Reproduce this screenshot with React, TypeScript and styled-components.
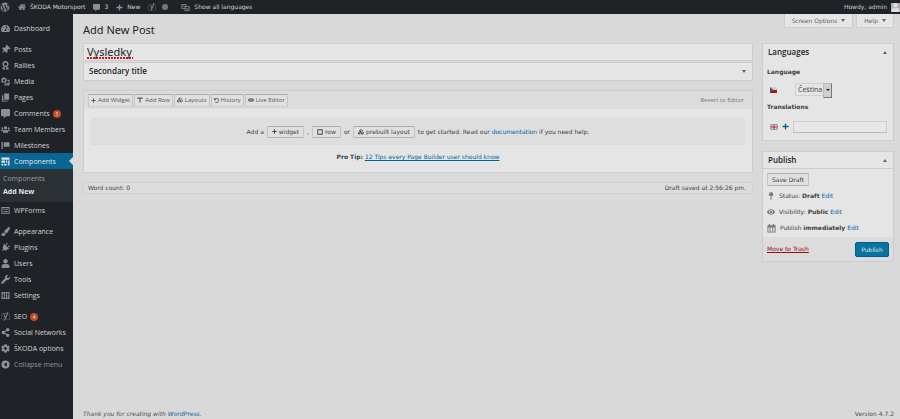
import React from "react";
import styled, { createGlobalStyle, css } from "styled-components";
import {
  FaWordpress, FaHome, FaCommentAlt, FaPlus, FaThumbtack, FaTachometerAlt, FaAward,
  FaPaintBrush, FaPlug, FaUser, FaWrench, FaYoast, FaShareAlt, FaCog, FaEye, FaUsers,
  FaUndo, FaMapPin, FaCubes,
} from "react-icons/fa";

const c = {
  dark: "#1f2328",
  sub: "#2b3035",
  blue: "#076694",
  link: "#00629a",
  page: "#d9d9d9",
  panel: "#e5e5e5",
  bar: "#dcdcdc",
  line: "#cdcdcd",
  text: "#3c3f43",
  strong: "#202428",
  icon: "#8b9095",
  menu: "#d2d2d2",
};

const menuFont = '"Open Sans", "Noto Sans", sans-serif';
const headFont = '"Noto Sans", "Open Sans", sans-serif';

const Global = createGlobalStyle`
  * { box-sizing: border-box; }
  html, body { margin: 0; background: ${c.page}; }
  body, button, input, select { font-family: "DejaVu Sans", "Noto Sans", sans-serif; font-size: 6px; }
  body { line-height: 10px; color: ${c.text}; }
  a { color: ${c.link}; text-decoration: none; }
  svg { flex: none; display: block; }
`;

const Page = styled.div`
  min-height: 100vh;
  display: flex;
  flex-direction: column;
`;

const AdminBar = styled.header`
  height: 14px;
  display: flex;
  align-items: center;
  gap: 8px;
  background: ${c.dark};
`;

const BarLink = styled.a<{ $end?: boolean; $wide?: boolean }>`
  display: flex;
  align-items: center;
  gap: ${(p) => (p.$wide ? 6 : 4)}px;
  color: ${c.menu};
  white-space: nowrap;
  margin-left: ${(p) => (p.$end ? "auto" : "0")};
  svg { color: ${c.icon}; }
`;

const Dot = styled.span`
  width: 6px;
  height: 6px;
  margin-right: 5px;
  border-radius: 50%;
  background: #74787c;
`;

const Avatar = styled.span`
  width: 9px;
  height: 9px;
  overflow: hidden;
  background: #b0b0b0;
  svg { color: #dedede; }
`;

const Body = styled.div`
  flex: 1;
  display: flex;
`;

const Sidebar = styled.nav`
  flex: none;
  width: 73px;
  padding-top: 6px;
  background: ${c.dark};
  font-family: ${menuFont};
  font-size: 7px;
`;

const MenuList = styled.ul`
  list-style: none;
  margin: 0 0 5px;
  padding: 0;
`;

const MenuLink = styled.a<{ $current?: boolean }>`
  position: relative;
  display: flex;
  align-items: center;
  gap: 4px;
  height: 16px;
  padding: 1px 0 0 1px;
  color: ${c.menu};
  white-space: nowrap;
  svg { color: ${c.icon}; }
  ${(p) =>
    p.$current &&
    css`
      background: ${c.blue};
      color: #e5e5e5;
      svg { color: #e5e5e5; }
      &::after {
        content: "";
        position: absolute;
        right: 0;
        top: 4px;
        border: 4px solid transparent;
        border-left-width: 0;
        border-right-color: ${c.page};
      }
    `}
`;

const CollapseButton = styled.button`
  display: flex;
  align-items: center;
  gap: 4px;
  height: 16px;
  padding: 1px 0 0 1px;
  border: 0;
  background: none;
  color: #8f9397;
  font-family: ${menuFont};
  font-size: 7px;
  line-height: 10px;
  white-space: nowrap;
`;

const SubMenu = styled.div`
  display: flex;
  flex-direction: column;
  gap: 3px;
  height: 33px;
  padding: 5px 3px;
  background: ${c.sub};
`;

const SubLink = styled.a<{ $current?: boolean }>`
  color: ${(p) => (p.$current ? "#e5e5e5" : "#9a9da1")};
  font-weight: ${(p) => (p.$current ? 700 : 400)};
`;

const Badge = styled.span`
  width: 8px;
  height: 8px;
  margin-left: -1px;
  border-radius: 50%;
  background: #bf4a22;
  color: #e5e5e5;
  font-size: 5px;
  line-height: 8px;
  text-align: center;
`;

const Content = styled.div`
  flex: 1;
  min-width: 0;
  display: flex;
  flex-direction: column;
  padding: 0 6px 0 10px;
`;

const HeadRow = styled.div`
  display: flex;
  justify-content: space-between;
  align-items: flex-start;
  height: 29px;
`;

const Heading = styled.h1`
  margin: 8px 0 0;
  font-family: ${headFont};
  font-size: 11px;
  line-height: 16px;
  font-weight: 400;
  color: ${c.strong};
`;

const ScreenTabs = styled.div`
  display: flex;
  gap: 3px;
`;

const ScreenTab = styled.button`
  display: flex;
  align-items: center;
  gap: 4px;
  height: 14px;
  padding: 0 7px;
  border: 1px solid ${c.line};
  border-top: 0;
  background: ${c.panel};
  color: #5e6368;
`;

const Triangle = styled.span<{ $up?: boolean }>`
  border: 2px solid transparent;
  ${(p) =>
    p.$up
      ? "border-top-width: 0; border-bottom: 3px solid #5e6368;"
      : "border-bottom-width: 0; border-top: 3px solid #5e6368;"}
`;

const Columns = styled.div`
  display: flex;
  gap: 9px;
  align-items: flex-start;
`;

const Editor = styled.main`
  flex: 1;
  min-width: 0;
`;

const Aside = styled.aside`
  width: 132px;
  display: flex;
  flex-direction: column;
  gap: 10px;
`;

const TitleInput = styled.input`
  display: block;
  width: 100%;
  height: 18px;
  padding: 0 3px 1px;
  border: 1px solid ${c.line};
  background: repeating-linear-gradient(90deg, #d01822 0 2px, transparent 2px 3px) 3px 13px / 46px 2px
    no-repeat ${c.panel};
  color: ${c.strong};
  font-family: ${headFont};
  font-size: 11px;
  line-height: 14px;
`;

const Box = styled.section`
  border: 1px solid ${c.line};
  background: ${c.panel};
`;

const SecondaryBox = styled(Box)`
  margin: 1px 0 9px;
`;

const BoxHead = styled.header<{ $divided?: boolean }>`
  display: flex;
  align-items: center;
  justify-content: space-between;
  height: 17px;
  padding: 0 6px 0 5px;
  border-bottom: 1px solid ${(p) => (p.$divided ? c.line : "transparent")};
`;

const BoxTitle = styled.h2`
  margin: 0;
  font-family: ${menuFont};
  font-size: 8px;
  line-height: 10px;
  font-weight: 600;
  color: ${c.strong};
`;

const ToggleButton = styled.button`
  display: flex;
  padding: 2px 0;
  border: 0;
  background: none;
`;

const Toolbar = styled.div`
  display: flex;
  align-items: center;
  gap: 1px;
  height: 18px;
  padding: 0 8px 0 4px;
  background: ${c.bar};
  font-family: ${menuFont};
`;

const SmallButton = styled.button`
  display: flex;
  align-items: center;
  gap: 2px;
  border: 1px solid #c4c4c4;
  border-top-color: #adadad;
  border-bottom-color: #b4b4b4;
  border-radius: 1px;
  background: #e0e0e0;
  color: ${c.text};
  white-space: nowrap;
`;

const ToolButton = styled(SmallButton)`
  height: 13px;
  padding: 0 2px;
  border-bottom-color: #cccccc;
  color: #55585b;
  font-family: ${menuFont};
`;

const Revert = styled.a`
  margin-left: auto;
  color: #777;
`;

const Welcome = styled.div`
  display: flex;
  align-items: center;
  justify-content: center;
  gap: 3px;
  height: 27px;
  margin: 9px 7px 0;
  background: #dedede;
  border: 1px solid #dbdbdb;
  white-space: nowrap;
`;

const InlineButton = styled(SmallButton)`
  height: 12px;
  padding: 0 4px;
`;

const Tip = styled.p`
  margin: 7px 0 10px;
  text-align: center;
  a { text-decoration: underline; }
`;

const StatusBar = styled.div`
  display: flex;
  justify-content: space-between;
  margin-top: 9px;
  padding: 0 6px 0 4px;
  border: 1px solid #d0d0d0;
  background: ${c.bar};
`;

const LanguageBody = styled.div`
  display: flex;
  flex-direction: column;
  padding: 6px 6px 7px 4px;
`;

const FieldLabel = styled.label`
  font-weight: 700;
`;

const FieldRow = styled.div<{ $gap: number }>`
  display: flex;
  align-items: center;
  gap: ${(p) => p.$gap}px;
  height: 13px;
  padding-left: 3px;
  margin: 6px 0;
  &:last-child { margin: 8px 0 0; }
`;

const SelectWrap = styled.span`
  position: relative;
  width: 37px;
  height: 13px;
  &::before {
    content: "";
    position: absolute;
    right: 0;
    width: 7px;
    height: 13px;
    border: 1px solid #777;
    border-top-color: #bbb;
    border-left-color: #bbb;
    background: #cfcfcf;
    pointer-events: none;
  }
  &::after {
    content: "";
    position: absolute;
    right: 2px;
    top: 6px;
    border: 2px solid transparent;
    border-top-color: #222;
    border-bottom-width: 0;
    pointer-events: none;
  }
`;

const Select = styled.select`
  appearance: none;
  width: 100%;
  height: 13px;
  padding: 0 2px;
  border: 1px solid #d0d0d0;
  background: ${c.panel};
  color: ${c.text};
  font-family: ${menuFont};
  font-size: 7px;
`;

const TextInput = styled.input`
  flex: 1;
  min-width: 0;
  height: 12px;
  border: 1px solid ${c.line};
  border-bottom-color: #b8b8b8;
  background: #e7e7e7;
`;

const PublishBody = styled.div`
  display: flex;
  flex-direction: column;
  align-items: flex-start;
  padding: 4px 4px 1px;
`;

const DraftButton = styled(SmallButton)`
  height: 13px;
  margin-bottom: 2px;
  padding: 0 4px;
`;

const MetaRow = styled.div`
  display: flex;
  align-items: center;
  gap: 4px;
  height: 16px;
  white-space: nowrap;
  svg { color: #73787c; }
`;

const Actions = styled.footer`
  display: flex;
  align-items: center;
  justify-content: space-between;
  height: 24px;
  padding: 0 4px;
  background: ${c.bar};
`;

const Trash = styled.a`
  color: #980b12;
  text-decoration: underline;
`;

const PublishButton = styled.button`
  width: 34px;
  height: 15px;
  padding: 0;
  border: 1px solid #075b84;
  border-radius: 2px;
  background: #0673a2;
  color: #e5e5e5;
`;

const PageFooter = styled.footer`
  display: flex;
  justify-content: space-between;
  margin-top: auto;
  color: #4b4e52;
`;

type ArtProps = { children: React.ReactNode; size?: number };
const Art = ({ children, size = 9 }: ArtProps) => (
  <svg width={size} height={size} viewBox="0 0 20 20" fill="currentColor" aria-hidden="true">
    {children}
  </svg>
);

const MediaIcon = () => (
  <Art><path fillRule="evenodd" d="M1 3h2l1-2h4l1 2h3v9H1zM6.500 5a2.500 2.500 0 1 0 0 5 2.500 2.500 0 0 0 0-5z" /><path d="M14 6h5v10a3 3 0 1 1-2-2.800V9h-3zM8 14h4v5H8z" /></Art>
);
const PagesIcon = () => <Art><path d="M7 1h11v14H7zM2 5h3v12h10v2H2z" /></Art>;
const MilestoneIcon = () => <Art><path d="M1 2h3v16H1zM6 3h13v10H6z" /></Art>;
const GridIcon = () => (
  <Art><path fillRule="evenodd" d="M1 1h18v5H1zM1 8h8v5H1zM1 15h4v4H1zM7 15h4v4H7zM11 8h3v5h-3zM16 8h3v11h-3zM12 15h2v4h-2z" /></Art>
);
const FormsIcon = () => (
  <Art><path fillRule="evenodd" d="M1 2h18v16H1zM3 5v11h14V5zM5 7h3v2H5zM9 7h6v2H9zM5 11h3v3H5zM9 11h6v3H9z" /></Art>
);
const SettingsIcon = () => (
  <Art><path fillRule="evenodd" d="M1 2h18v16H1zM4 4v5H3v3h1v4h2v-4h1V9H6V4zM9 4v8H8v2h1v2h2v-2h1v-2h-1V4zM14 4v2h-1v3h1v7h2V9h1V6h-1V4z" /></Art>
);
const CollapseIcon = () => (
  <Art><path fillRule="evenodd" d="M10 1a9 9 0 1 0 0 18 9 9 0 0 0 0-18zM13 5v10l-7-5z" /></Art>
);
const LanguageIcon = () => (
  <Art><path fillRule="evenodd" d="M1 2h11v5h7v11H8v-5H1zM3 4v7h5V7h2V4zM10 9v7h7V9z" /><path d="M4 6h4v2H4zM12 11h3v3h-3z" /></Art>
);
const CalendarIcon = () => (
  <Art><path fillRule="evenodd" d="M1 3h3V0h3v3h6V0h3v3h3v16H1zM3 8v9h3V8zM8 8v9h4V8zM14 8v9h3V8z" /></Art>
);
const RowIcon = () => <Art size={6}><path d="M1 2h18v4H1zM8 6h4v12H8z" /></Art>;
const BoxIcon = () => <Art size={6}><path fillRule="evenodd" d="M1 1h18v18H1zM4 4v12h12V4z" /></Art>;

const CzechFlag = () => (
  <svg width="7" height="6" viewBox="0 0 14 12" role="img" aria-label="Čeština">
    <path fill="#d0d0d0" d="M0 0h14v6H0z" /><path fill="#bf1010" d="M0 6h14v6H0z" /><path fill="#375b80" d="M0 0l7 6-7 6z" />
  </svg>
);
const BritishFlag = () => (
  <svg width="8" height="6" viewBox="0 0 16 12" role="img" aria-label="English">
    <path fill="#4a5c86" d="M0 0h16v12H0z" />
    <path stroke="#ddd" strokeWidth="2" d="M0 0l16 12M16 0L0 12" />
    <path stroke="#ddd" strokeWidth="6" d="M8 0v12M0 6h16" />
    <path stroke="#b8202a" strokeWidth="2" d="M8 0v12M0 6h16" />
  </svg>
);

type Item = { label: string; icon: React.ReactNode; badge?: string; current?: boolean };

const groups: Item[][] = [
  [{ label: "Dashboard", icon: <FaTachometerAlt size={9} /> }],
  [
    { label: "Posts", icon: <FaThumbtack size={9} transform="rotate(45)" /> },
    { label: "Rallies", icon: <FaAward size={9} /> },
    { label: "Media", icon: <MediaIcon /> },
    { label: "Pages", icon: <PagesIcon /> },
    { label: "Comments", icon: <FaCommentAlt size={9} />, badge: "3" },
    { label: "Team Members", icon: <FaUsers size={9} /> },
    { label: "Milestones", icon: <MilestoneIcon /> },
    { label: "Components", icon: <GridIcon />, current: true },
    { label: "WPForms", icon: <FormsIcon /> },
  ],
  [
    { label: "Appearance", icon: <FaPaintBrush size={9} /> },
    { label: "Plugins", icon: <FaPlug size={9} transform="rotate(45)" /> },
    { label: "Users", icon: <FaUser size={9} /> },
    { label: "Tools", icon: <FaWrench size={9} /> },
    { label: "Settings", icon: <SettingsIcon /> },
  ],
  [
    { label: "SEO", icon: <FaYoast size={9} />, badge: "4" },
    { label: "Social Networks", icon: <FaShareAlt size={9} /> },
    { label: "ŠKODA options", icon: <FaCog size={9} /> },
  ],
];

export default function App() {
  return (
    <Page>
      <Global />
      <AdminBar>
        <BarLink href="#" aria-label="WordPress"><FaWordpress size={10} /></BarLink>
        <BarLink href="#"><FaHome size={8} />ŠKODA Motorsport</BarLink>
        <BarLink href="#"><FaCommentAlt size={7} />3</BarLink>
        <BarLink href="#"><FaPlus size={7} />New</BarLink>
        <BarLink href="#" $wide aria-label="SEO"><FaYoast size={8} /><Dot /></BarLink>
        <BarLink href="#"><LanguageIcon />Show all languages</BarLink>
        <BarLink href="#" $end>
          Howdy, admin
          <Avatar><FaUser size={9} /></Avatar>
        </BarLink>
      </AdminBar>
      <Body>
        <Sidebar>
          {groups.map((group, i) => (
            <MenuList key={i}>
              {group.map((item) => (
                <li key={item.label}>
                  <MenuLink href="#" $current={item.current}>
                    {item.icon}
                    {item.label}
                    {item.badge && <Badge>{item.badge}</Badge>}
                  </MenuLink>
                  {item.current && (
                    <SubMenu>
                      <SubLink href="#">Components</SubLink>
                      <SubLink href="#" $current>Add New</SubLink>
                    </SubMenu>
                  )}
                </li>
              ))}
              {i === groups.length - 1 && (
                <li><CollapseButton><CollapseIcon />Collapse menu</CollapseButton></li>
              )}
            </MenuList>
          ))}
        </Sidebar>
        <Content>
          <HeadRow>
            <Heading>Add New Post</Heading>
            <ScreenTabs>
              <ScreenTab>Screen Options <Triangle /></ScreenTab>
              <ScreenTab>Help <Triangle /></ScreenTab>
            </ScreenTabs>
          </HeadRow>
          <Columns>
            <Editor>
              <TitleInput aria-label="Title" spellCheck={false} defaultValue="Vysledky" />
              <SecondaryBox>
                <BoxHead>
                  <BoxTitle>Secondary title</BoxTitle>
                  <ToggleButton aria-label="Expand Secondary title"><Triangle /></ToggleButton>
                </BoxHead>
              </SecondaryBox>
              <Box>
                <Toolbar>
                  <ToolButton><FaPlus size={5} />Add Widget</ToolButton>
                  <ToolButton><RowIcon />Add Row</ToolButton>
                  <ToolButton><FaCubes size={6} />Layouts</ToolButton>
                  <ToolButton><FaUndo size={5} />History</ToolButton>
                  <ToolButton><FaEye size={6} />Live Editor</ToolButton>
                  <Revert href="#">Revert to Editor</Revert>
                </Toolbar>
                <Welcome>
                  Add a
                  <InlineButton><FaPlus size={5} />widget</InlineButton>,
                  <InlineButton><BoxIcon />row</InlineButton>
                  or
                  <InlineButton><FaCubes size={6} />prebuilt layout</InlineButton>
                  <span>to get started. Read our <a href="#">documentation</a> if you need help.</span>
                </Welcome>
                <Tip><b>Pro Tip:</b> <a href="#">12 Tips every Page Builder user should know</a></Tip>
              </Box>
              <StatusBar><span>Word count: 0</span><span>Draft saved at 2:56:26 pm.</span></StatusBar>
            </Editor>
            <Aside>
              <Box>
                <BoxHead>
                  <BoxTitle>Languages</BoxTitle>
                  <ToggleButton aria-label="Collapse Languages"><Triangle $up /></ToggleButton>
                </BoxHead>
                <LanguageBody>
                  <FieldLabel htmlFor="language">Language</FieldLabel>
                  <FieldRow $gap={18}>
                    <CzechFlag />
                    <SelectWrap>
                      <Select id="language"><option>Čeština</option></Select>
                    </SelectWrap>
                  </FieldRow>
                  <FieldLabel htmlFor="translation">Translations</FieldLabel>
                  <FieldRow $gap={4}>
                    <BritishFlag />
                    <a href="#" aria-label="Add translation"><FaPlus size={7} /></a>
                    <TextInput id="translation" />
                  </FieldRow>
                </LanguageBody>
              </Box>
              <Box>
                <BoxHead $divided>
                  <BoxTitle>Publish</BoxTitle>
                  <ToggleButton aria-label="Collapse Publish"><Triangle $up /></ToggleButton>
                </BoxHead>
                <PublishBody>
                  <DraftButton>Save Draft</DraftButton>
                  <MetaRow><FaMapPin size={8} /><span>Status: <b>Draft</b> <a href="#">Edit</a></span></MetaRow>
                  <MetaRow><FaEye size={8} /><span>Visibility: <b>Public</b> <a href="#">Edit</a></span></MetaRow>
                  <MetaRow><CalendarIcon /><span>Publish <b>immediately</b> <a href="#">Edit</a></span></MetaRow>
                </PublishBody>
                <Actions>
                  <Trash href="#">Move to Trash</Trash>
                  <PublishButton>Publish</PublishButton>
                </Actions>
              </Box>
            </Aside>
          </Columns>
          <PageFooter>
            <i>Thank you for creating with <a href="#">WordPress</a>.</i>
            <span>Version 4.7.2</span>
          </PageFooter>
        </Content>
      </Body>
    </Page>
  );
}
